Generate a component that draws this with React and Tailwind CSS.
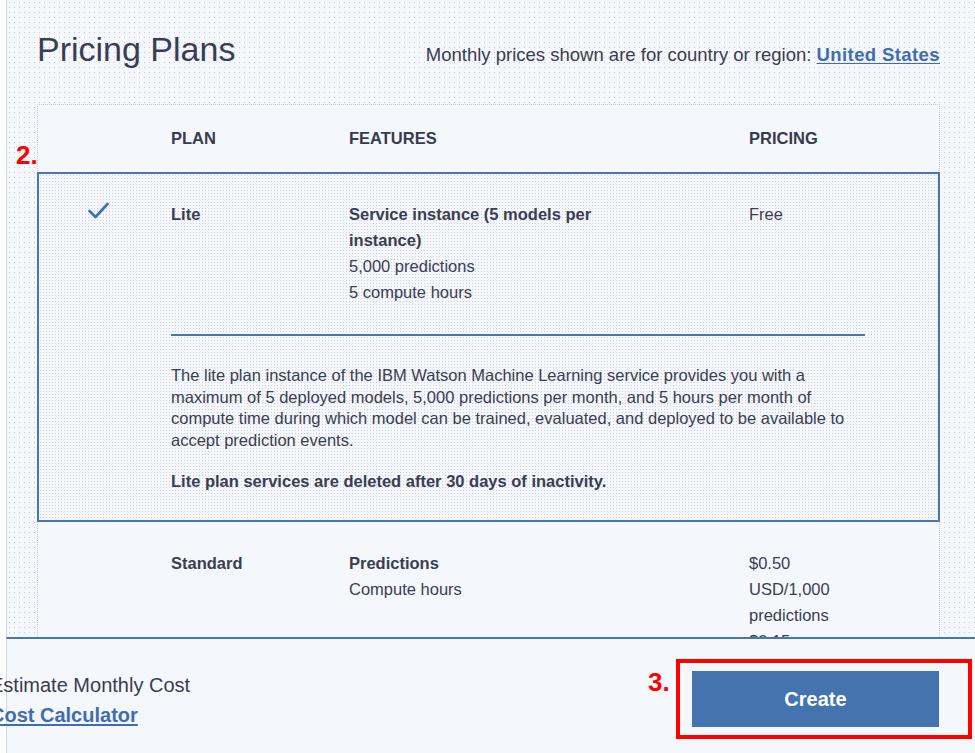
import React from "react";

const Check = () => (
    <svg width="21" height="17" viewBox="0 0 21 17" fill="none">
        <path d="M1.5 9 L7.5 15 L19.5 2" stroke="#3f6fb2" strokeWidth="2.6" strokeLinecap="round" strokeLinejoin="round" />
    </svg>
)

const App = () => {
    return (
        <div className="relative w-[975px] h-[753px] overflow-hidden bg-white font-['Liberation_Sans',Arial,sans-serif] text-[#3b3e52]">
            <div className="ml-[6px] h-full border-l border-[#d3d7de] bg-[#f4f7fc] bg-[radial-gradient(#c6cbd5_0.7px,transparent_1px)] bg-[length:5px_5px] pl-[30px] pr-[35px]">
                {/* title */}
                <div className="flex items-baseline justify-between h-[104px] pt-[29px]">
                    <h1 className="text-[34px] leading-[40px] font-normal text-[#3a3d55]">Pricing Plans</h1>
                    <p className="text-[18.5px] leading-[24px] text-[#3b3d4e]">
                        Monthly prices shown are for country or region:{" "}
                        <a href="#" className="font-bold tracking-[0.4px] text-[#3f6db0] underline underline-offset-2">United States</a>
                    </p>
                </div>

                {/* table */}
                <div className="border border-dotted border-[#c4c8d0] bg-[#f4f7fc]">
                    <div className="grid grid-cols-[133px_178px_400px_1fr] h-[67px] items-center text-[16.5px] font-bold text-[#383b50]">
                        <div></div>
                        <div>PLAN</div>
                        <div>FEATURES</div>
                        <div>PRICING</div>
                    </div>

                    <div className="-mx-px border-2 border-[#4a75b3] bg-[radial-gradient(#cdd2dc_0.6px,transparent_0.9px)] bg-[length:3px_3px] pt-[27px] pb-[27px]">
                        <div className="grid grid-cols-[132px_178px_400px_1fr] text-[16.5px] leading-[26px]">
                            <div className="pl-[49px] pt-[1px]"><Check /></div>
                            <div className="font-bold">Lite</div>
                            <div className="w-[262px]">
                                <div className="font-bold">Service instance (5 models per instance)</div>
                                <div>5,000 predictions</div>
                                <div>5 compute hours</div>
                            </div>
                            <div>Free</div>
                        </div>
                        <div className="ml-[132px] mt-[29px] w-[694px] h-[2px] bg-[#4a75b3]"></div>
                        <div className="ml-[132px] w-[694px] text-[16.5px] leading-[21.5px]">
                            <p className="mt-[29px]">
                                The lite plan instance of the IBM Watson Machine Learning service provides you with a maximum of 5 deployed models, 5,000 predictions per month, and 5 hours per month of compute time during which model can be trained, evaluated, and deployed to be available to accept prediction events.
                            </p>
                            <p className="mt-[20px] font-bold">Lite plan services are deleted after 30 days of inactivity.</p>
                        </div>
                    </div>

                    <div className="grid grid-cols-[133px_178px_400px_1fr] pt-[28px] pb-[30px] text-[16.5px] leading-[26px]">
                        <div></div>
                        <div className="font-bold">Standard</div>
                        <div>
                            <div className="font-bold">Predictions</div>
                            <div>Compute hours</div>
                        </div>
                        <div>
                            <div>$0.50</div>
                            <div>USD/1,000</div>
                            <div>predictions</div>
                            <div>$0.15</div>
                            <div>USD/compute</div>
                            <div>hour</div>
                        </div>
                    </div>
                </div>
            </div>

            {/* sticky footer */}
            <div className="absolute left-[6px] right-0 top-[637px] bottom-0 border-t-2 border-t-[#4a75b3] border-l border-l-[#d3d7de] bg-[#f4f7fc] flex items-start justify-between pt-[31px]">
                <div className="-ml-[17px] text-[20px] leading-[30px] text-[#3b3d4e]">
                    <div>Estimate Monthly Cost</div>
                    <a href="#" className="font-bold text-[#3f6db0] underline underline-offset-2">Cost Calculator</a>
                </div>
                <button className="mt-px mr-[36px] w-[247px] h-[56px] bg-[#4473af] text-white text-[20px] font-bold">Create</button>
            </div>

            {/* annotations */}
            <div className="absolute left-[16px] top-[142px] text-[26px] leading-none font-bold text-[#ff0000]">2.</div>
            <div className="absolute left-[648px] top-[669px] text-[26px] leading-none font-bold text-[#ff0000]">3.</div>
            <div className="absolute left-[676px] top-[659px] w-[296px] h-[80px] border-4 border-[#ff0000]"></div>
        </div>
    )
}

export default App;
